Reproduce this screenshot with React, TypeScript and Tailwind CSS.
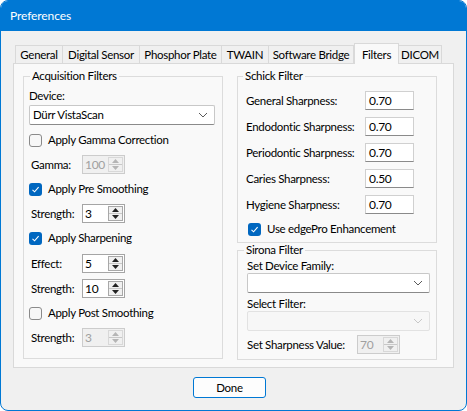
import React from 'react'

const tabs: [string, string, boolean][] = [
  ['General', 'w-[48px]', false],
  ['Digital Sensor', 'w-[78px]', false],
  ['Phosphor Plate', 'w-[83px]', false],
  ['TWAIN', 'w-[48px]', false],
  ['Software Bridge', 'w-[86px]', false],
  ['Filters', 'w-[45px]', true],
  ['DICOM', 'w-[44px]', false],
]

const schick: [string, string][] = [
  ['General Sharpness:', '0.70'],
  ['Endodontic Sharpness:', '0.70'],
  ['Periodontic Sharpness:', '0.70'],
  ['Caries Sharpness:', '0.50'],
  ['Hygiene Sharpness:', '0.70'],
]

function Chevron({ disabled }: { disabled?: boolean }) {
  return (
    <svg width="10" height="6" viewBox="0 0 10 6" className="mr-[6px]">
      <polyline
        points="1,1 5,5 9,1"
        fill="none"
        stroke={disabled ? '#c8c8c8' : '#5a5a5a'}
        strokeWidth="1"
      />
    </svg>
  )
}

function Check({ checked, label }: { checked: boolean; label: string }) {
  return (
    <div className="flex h-[16px] items-center gap-[6px]">
      {checked ? (
        <span className="flex h-[13px] w-[13px] items-center justify-center rounded-[3px] bg-[#0067c0]">
          <svg width="9" height="9" viewBox="0 0 9 9">
            <polyline points="1.5,4.8 3.6,6.8 7.6,2.2" fill="none" stroke="white" strokeWidth="1.1" />
          </svg>
        </span>
      ) : (
        <span className="h-[13px] w-[13px] rounded-[3px] border border-[#8a8a8a] bg-[#f7f7f7]" />
      )}
      <span className="leading-[16px]">{label}</span>
    </div>
  )
}

function Spin({ value, disabled }: { value: string; disabled?: boolean }) {
  const arrow = disabled ? '#b5b5b5' : '#222222'
  return (
    <div
      className={
        disabled
          ? 'flex h-[19px] w-[43px] border border-[#cccccc] bg-[#f0f0f0] text-[#a0a0a0]'
          : 'flex h-[19px] w-[43px] border border-[#a5a5a5] bg-white text-black'
      }
    >
      <span className="flex-1 pl-[2px] text-[12px] leading-[17px]">{value}</span>
      <div className={disabled ? 'my-px mr-px flex w-[15px] flex-col border border-[#d8d8d8]' : 'my-px mr-px flex w-[15px] flex-col border border-[#a8a8a8]'}>
        <div className="flex flex-1 items-center justify-center border-b border-[#c8c8c8] bg-[#f0f0f0]">
          <svg width="7" height="4" viewBox="0 0 7 4">
            <polygon points="0,4 7,4 3.5,0" fill={arrow} />
          </svg>
        </div>
        <div className="flex flex-1 items-center justify-center bg-[#f0f0f0]">
          <svg width="7" height="4" viewBox="0 0 7 4">
            <polygon points="0,0 7,0 3.5,4" fill={arrow} />
          </svg>
        </div>
      </div>
    </div>
  )
}

function SpinRow({ label, value, disabled, cls }: { label: string; value: string; disabled?: boolean; cls: string }) {
  return (
    <div className={`flex h-[19px] items-center ${cls}`}>
      <span className="w-[53px] pl-[2px] leading-[16px]">{label}</span>
      <Spin value={value} disabled={disabled} />
    </div>
  )
}

export default function App() {
  return (
    <div className="flex h-[411px] w-[467px] flex-col overflow-hidden whitespace-nowrap rounded-[8px] border border-[#0078d4] bg-[#f0f0f0] font-['Lato',sans-serif] text-[11.5px] tracking-[-0.3px] text-black">
      {/* Title bar */}
      <div className="flex h-[30px] shrink-0 items-center bg-[#0078d4] pl-[9px] pb-[1px] text-[12px] tracking-[-0.1px] text-white">
        Preferences
      </div>

      <div className="px-[12px] pt-[12px]">
        {/* Tabs */}
        <div className="flex h-[20px] items-end pl-[2px]">
          {tabs.map(([name, w, sel]) =>
            sel ? (
              <div
                key={name}
                className={`relative z-10 -mb-px flex h-[21px] items-start justify-center border border-b-0 border-[#d9d9d9] bg-[#f9f9f9] pt-[2px] ${w}`}
              >
                {name}
              </div>
            ) : (
              <div
                key={name}
                className={`-ml-px flex h-[18px] items-center justify-center border border-b-0 border-[#d9d9d9] bg-[#f0f0f0] first:ml-0 ${w}`}
              >
                {name}
              </div>
            )
          )}
        </div>

        {/* Panel */}
        <div className="flex h-[305px] w-[441px] gap-[14px] border border-[#d9d9d9] bg-[#f9f9f9] pl-[9px] pt-[5px]">
          {/* Acquisition filters */}
          <fieldset className="h-[290px] w-[200px] border border-[#dcdcdc] p-0">
            <legend className="ml-[6px] px-[2px] leading-[14px]">Acquisition Filters</legend>
            <div className="flex flex-col pl-[5px]">
              <div className="mt-[5px] leading-[16px]">Device:</div>
              <div className="mt-px flex h-[20px] w-[186px] items-center justify-between rounded-[2px] border border-[#c8c8c8] border-b-[#8a8a8a] bg-white pl-[3px]">
                <span>Dürr VistaScan</span>
                <Chevron />
              </div>
              <div className="mt-[7px]">
                <Check checked={false} label="Apply Gamma Correction" />
              </div>
              <SpinRow cls="mt-[7px]" label="Gamma:" value="100" disabled />
              <div className="mt-[7px]">
                <Check checked label="Apply Pre Smoothing" />
              </div>
              <SpinRow cls="mt-[7px]" label="Strength:" value="3" />
              <div className="mt-[7px]">
                <Check checked label="Apply Sharpening" />
              </div>
              <SpinRow cls="mt-[8px]" label="Effect:" value="5" />
              <SpinRow cls="mt-[6px]" label="Strength:" value="10" />
              <div className="mt-[7px]">
                <Check checked={false} label="Apply Post Smoothing" />
              </div>
              <SpinRow cls="mt-[7px]" label="Strength:" value="3" disabled />
            </div>
          </fieldset>

          <div className="flex w-[200px] flex-col">
            {/* Schick */}
            <fieldset className="h-[174px] w-[200px] border border-[#dcdcdc] p-0">
              <legend className="ml-[5px] px-[2px] leading-[14px]">Schick Filter</legend>
              <div className="flex flex-col pl-[8px] pt-px">
                {schick.map(([label, v]) => (
                  <div key={label} className="mt-[7px] flex h-[19px] items-center">
                    <span className="w-[119px] leading-[16px]">{label}</span>
                    <div className="flex h-[19px] w-[49px] items-center border border-[#d0d0d0] border-b-[#8a8a8a] bg-white pl-[3px] text-[12px]">
                      {v}
                    </div>
                  </div>
                ))}
                <div className="mt-[7px] pl-[2px]">
                  <Check checked label="Use edgePro Enhancement" />
                </div>
              </div>
            </fieldset>

            {/* Sirona */}
            <fieldset className="h-[117px] w-[200px] border border-[#dcdcdc] p-0">
              <legend className="ml-[6px] px-[2px] leading-[14px]">Sirona Filter</legend>
              <div className="flex flex-col pl-[9px]">
                <div className="mt-[2px] leading-[14px]">Set Device Family:</div>
                <div className="flex h-[20px] w-[183px] items-center justify-end rounded-[2px] border border-[#c8c8c8] border-b-[#8a8a8a] bg-white">
                  <Chevron />
                </div>
                <div className="mt-[4px] leading-[14px]">Select Filter:</div>
                <div className="flex h-[20px] w-[183px] items-center justify-end rounded-[2px] border border-[#e2e2e2] bg-[#f7f7f7]">
                  <Chevron disabled />
                </div>
                <div className="mt-[4px] flex h-[19px] items-center">
                  <span className="w-[110px] leading-[16px]">Set Sharpness Value:</span>
                  <Spin value="70" disabled />
                </div>
              </div>
            </fieldset>
          </div>
        </div>
      </div>

      {/* Footer */}
      <div className="pl-[192px] pt-[9px]">
        <button className="h-[21px] w-[73px] rounded-[3px] border border-[#0078d4] bg-[#fdfdfd] leading-[19px]">
          Done
        </button>
      </div>
    </div>
  )
}
